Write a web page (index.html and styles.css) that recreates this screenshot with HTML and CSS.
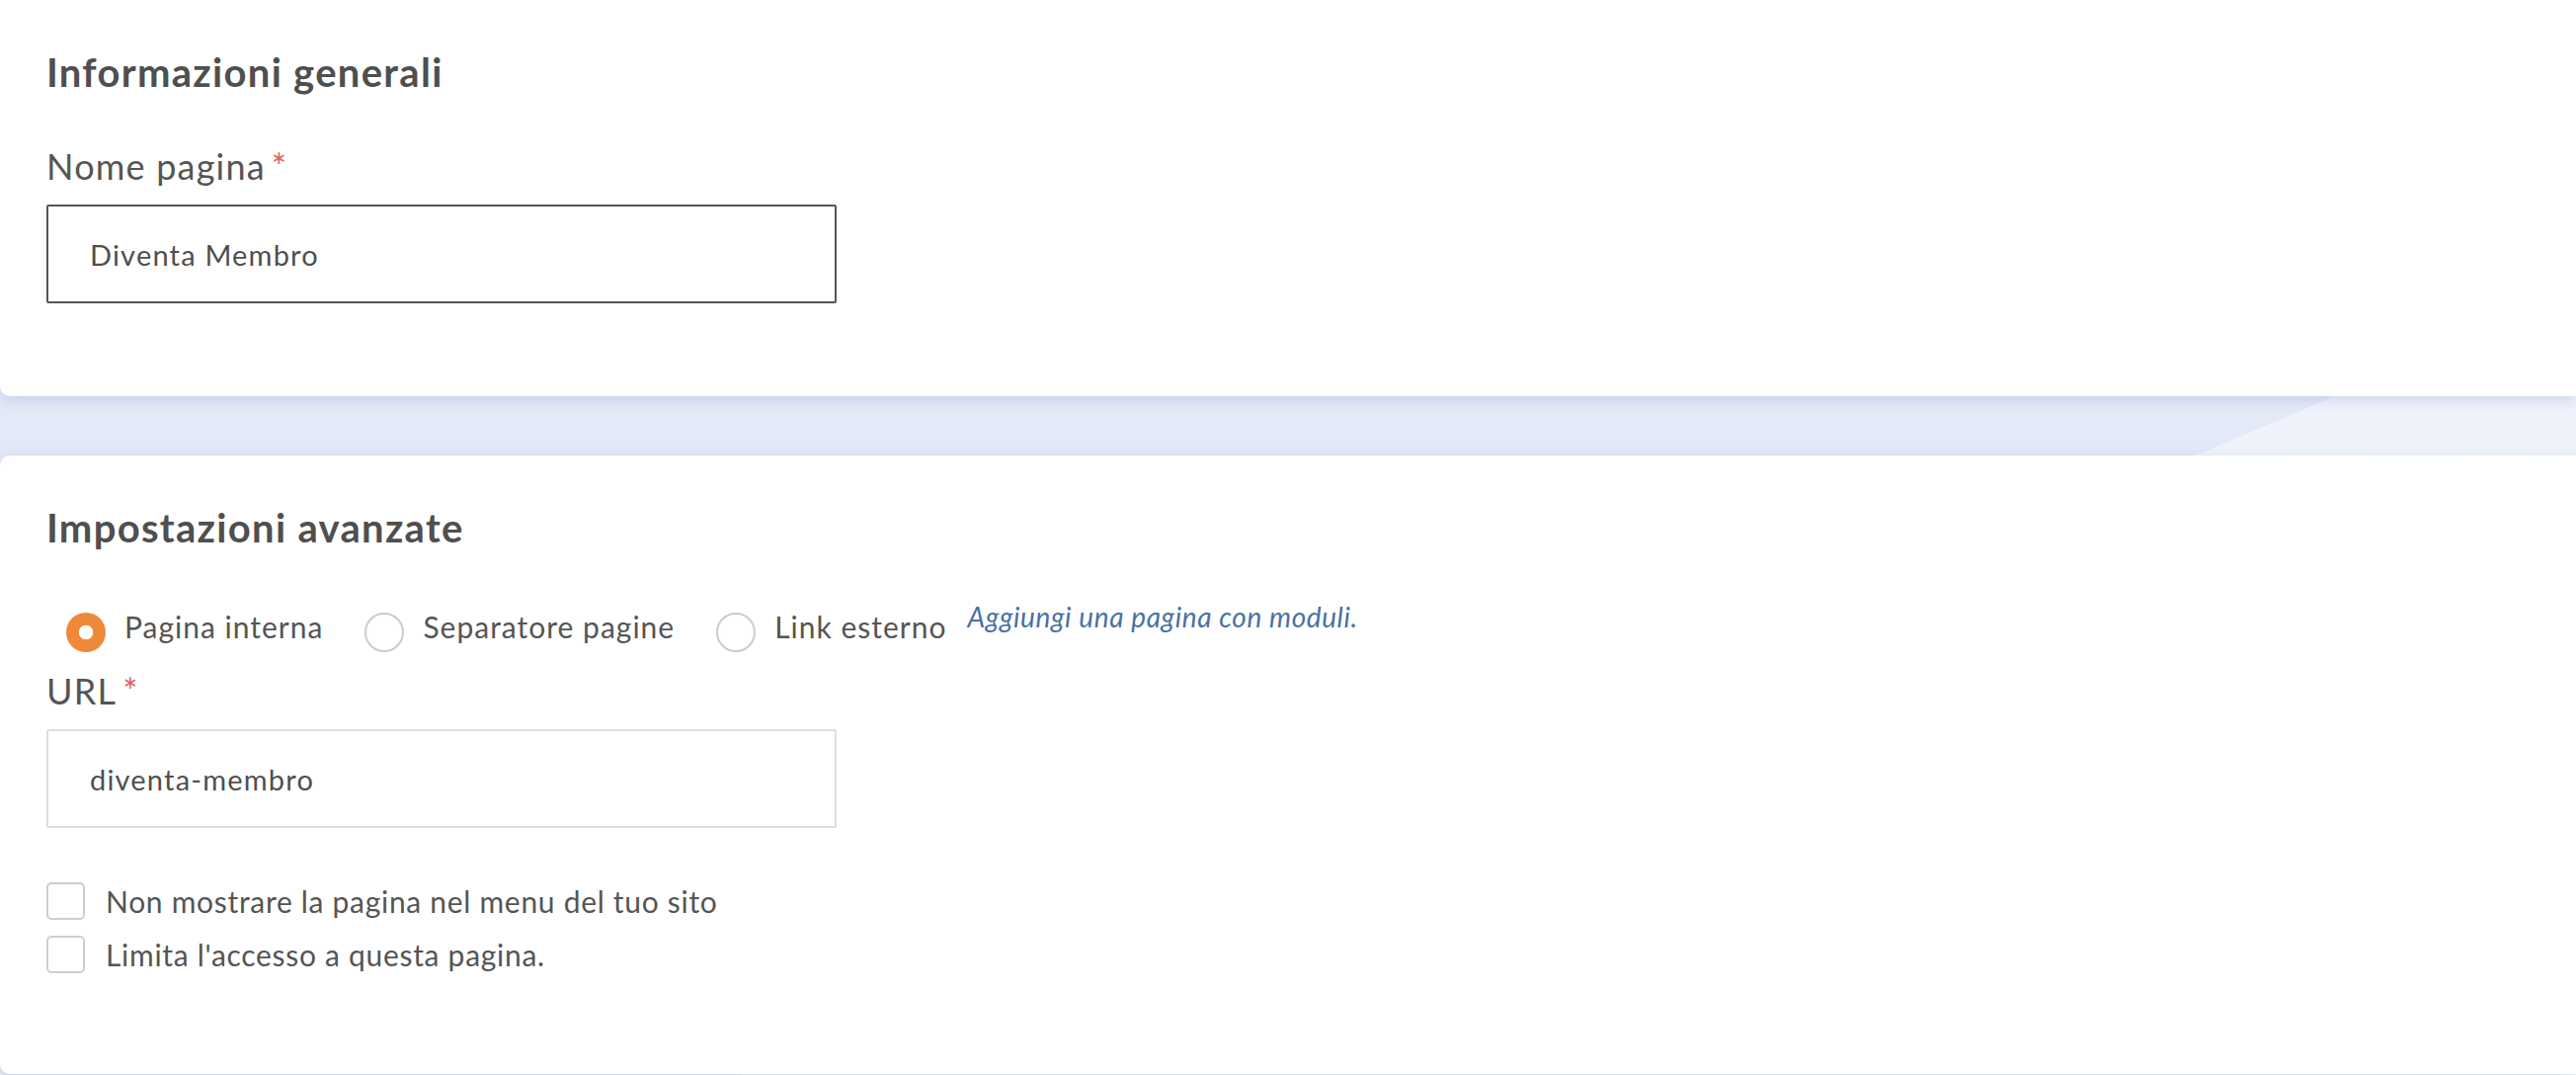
FILE: index.html
```html
<!DOCTYPE html>
<html lang="it">
<head>
<meta charset="UTF-8" />
<meta name="viewport" content="width=device-width, initial-scale=1" />
<title>Impostazioni pagina</title>
<link rel="stylesheet" href="styles.css">
</head>
<body>
  <div class="page">
    <section class="card card-first">
      <h2 class="card-title">Informazioni generali</h2>
      <label class="field-label" for="page-name">Nome pagina<span class="required">*</span></label>
      <input class="text-input is-focused" id="page-name" type="text" value="Diventa Membro" />
    </section>

    <section class="card">
      <h2 class="card-title">Impostazioni avanzate</h2>

      <div class="radio-row" role="radiogroup">
        <label class="radio-option">
          <input type="radio" name="page-type" checked />
          <span>Pagina interna</span>
        </label>
        <label class="radio-option">
          <input type="radio" name="page-type" />
          <span>Separatore pagine</span>
        </label>
        <label class="radio-option">
          <input type="radio" name="page-type" />
          <span>Link esterno</span>
        </label>
        <a class="hint-link" href="#">Aggiungi una pagina con moduli.</a>
      </div>

      <label class="field-label field-label-url" for="page-url">URL<span class="required">*</span></label>
      <input class="text-input" id="page-url" type="text" value="diventa-membro" />

      <div class="check-list">
        <label class="check-option">
          <input type="checkbox" />
          <span>Non mostrare la pagina nel menu del tuo sito</span>
        </label>
        <label class="check-option">
          <input type="checkbox" />
          <span>Limita l'accesso a questa pagina.</span>
        </label>
      </div>
    </section>
  </div>
</body>
</html>
```

FILE: styles.css
```css
/* Reset and base */
* {
  box-sizing: border-box;
}
body {
  margin: 0;
  font-family: 'Lato', 'Open Sans', sans-serif;
  color: #555555;
}

/* Page background with the light diagonal on the right */
.page {
  min-height: 100vh;
  display: flex;
  flex-direction: column;
  gap: 60px;
  background:
    linear-gradient(156.95deg, transparent 1294px, rgba(255, 255, 255, 0.45) 1295px),
    #e4e9f7;
}

/* Cards */
.card {
  display: flex;
  flex-direction: column;
  align-items: flex-start;
  background: #ffffff;
  border-radius: 10px 0 0 10px;
  padding: 49px 47px 94px;
  box-shadow: 0 4px 14px rgba(140, 160, 215, 0.35);
}

.card-first {
  border-top-left-radius: 0;
}

.card + .card {
  padding-bottom: 102px;
}

.card-title {
  margin: 0;
  font-size: 40px;
  line-height: 48px;
  font-weight: 700;
  letter-spacing: 1.3px;
  color: #4f4f4f;
}

/* Fields */
.field-label {
  margin-top: 49px;
  font-size: 36px;
  line-height: 44px;
  letter-spacing: 1.2px;
  color: #555555;
}

.field-label-url {
  margin-top: 17px;
}

.required {
  margin-left: 6px;
  color: #e2625b;
  font-size: 36px;
}

.text-input {
  margin-top: 17px;
  width: 800px;
  height: 100px;
  padding: 0 42px;
  border: 2px solid #d9dde5;
  border-radius: 2px;
  font-family: inherit;
  font-size: 29px;
  letter-spacing: 1.2px;
  color: #4f4f4f;
  background: #ffffff;
  outline: none;
}

.text-input.is-focused {
  border-color: #555555;
}

/* Radio row */
.radio-row {
  display: flex;
  align-items: flex-start;
  margin-top: 62px;
  padding-left: 20px;
}

.radio-option {
  display: flex;
  align-items: flex-start;
  gap: 19px;
  margin-right: 42px;
  font-size: 30px;
  line-height: 28px;
  letter-spacing: 1px;
  color: #555555;
}

.radio-option:nth-child(3) {
  margin-right: 21px;
}

.radio-option input {
  appearance: none;
  margin: 0;
  width: 40px;
  height: 40px;
  border: 2px solid #c6cbd5;
  border-radius: 50%;
  background: #ffffff;
}

.radio-option input:checked {
  border: none;
  background: radial-gradient(circle, #ffffff 0 7px, #ef893a 7.5px);
}

.hint-link {
  margin-top: -10px;
  font-size: 28px;
  line-height: 28px;
  letter-spacing: 0.6px;
  font-style: italic;
  color: #4a70a3;
  text-decoration: none;
}

/* Checkboxes */
.check-list {
  display: flex;
  flex-direction: column;
  gap: 16px;
  margin-top: 55px;
}

.check-option {
  display: flex;
  align-items: center;
  gap: 21px;
  font-size: 30px;
  line-height: 38px;
  letter-spacing: 0.7px;
  color: #555555;
}

.check-option input {
  appearance: none;
  margin: 0;
  width: 39px;
  height: 38px;
  border: 2px solid #c9ced8;
  border-radius: 5px;
  background: #ffffff;
}
```
